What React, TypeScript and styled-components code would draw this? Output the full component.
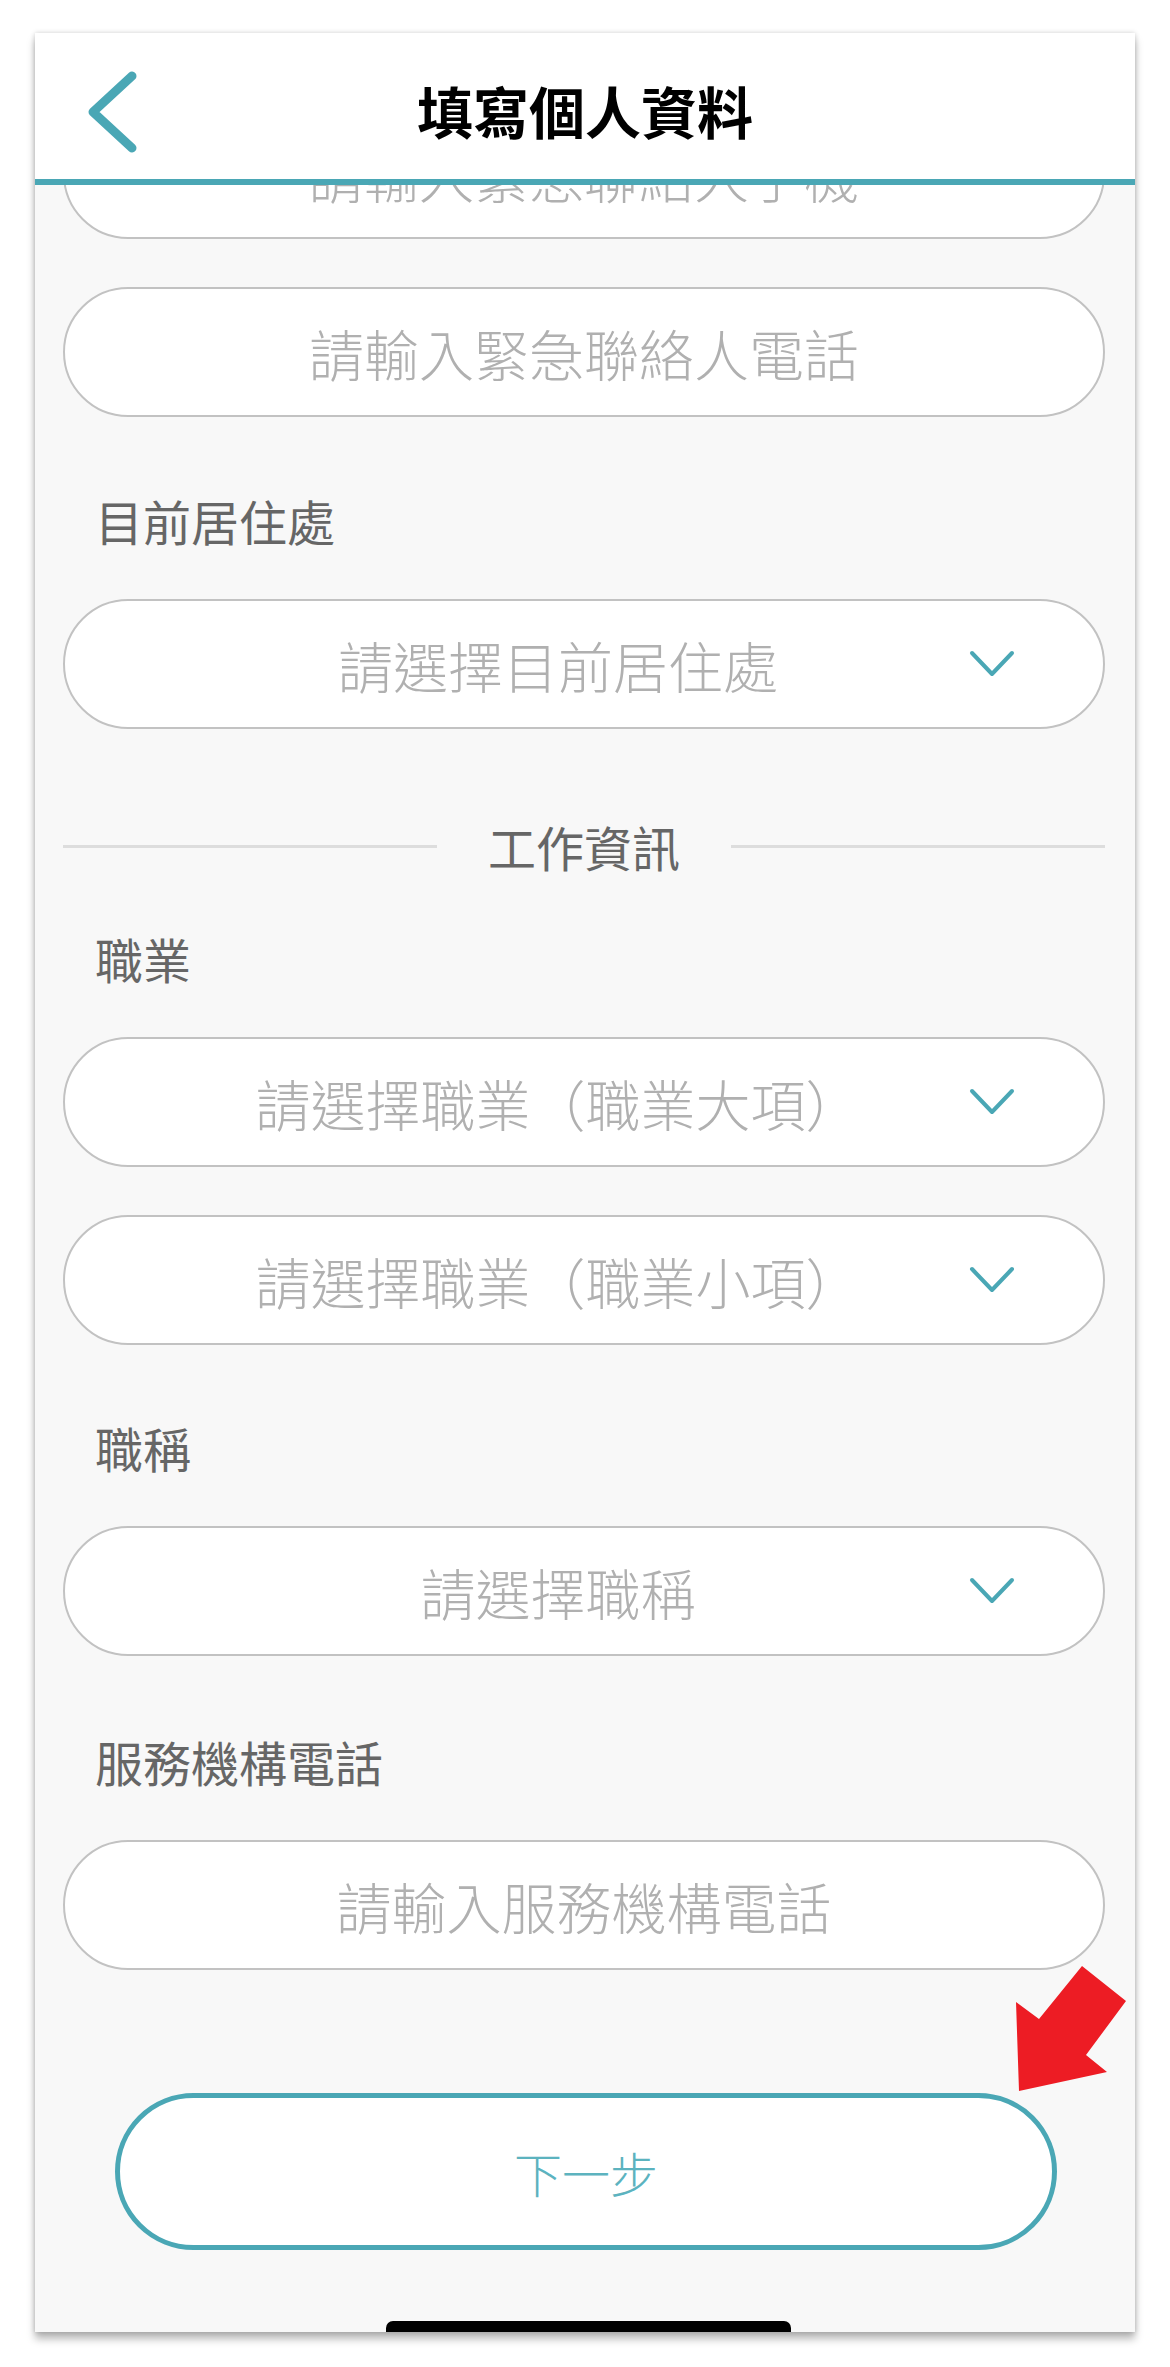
import React from "react";
import styled, { createGlobalStyle } from "styled-components";

const GlobalStyle = createGlobalStyle`
  html, body {
    margin: 0;
    padding: 0;
    background: #ffffff;
  }
  body {
    font-family: "Noto Sans CJK TC", "Noto Sans", sans-serif;
  }
  * { box-sizing: border-box; }
`;

const TEAL = "#4aa7b5";

const Page = styled.div`
  width: 1170px;
  height: 2367px;
  padding: 33px 35px 35px 35px;
  background: #ffffff;
`;

const Phone = styled.div`
  position: relative;
  width: 1100px;
  height: 2299px;
  background: #f8f8f8;
  overflow: hidden;
  display: flex;
  flex-direction: column;
  box-shadow: 0 7px 8px rgba(0, 0, 0, 0.28), 0 0 5px rgba(0, 0, 0, 0.18);
`;

const Header = styled.header`
  position: relative;
  z-index: 2;
  height: 152px;
  flex: none;
  background: #ffffff;
  border-bottom: 6px solid ${TEAL};
  display: flex;
  align-items: center;
  justify-content: center;
  padding-top: 8px;
`;

const BackButton = styled.button`
  position: absolute;
  left: 50px;
  top: 35px;
  width: 60px;
  height: 90px;
  padding: 0;
  border: none;
  background: transparent;
  display: flex;
  align-items: center;
  justify-content: center;
`;

const Title = styled.h1`
  margin: 0;
  font-size: 56px;
  line-height: 1;
  font-weight: 700;
  color: #000000;
  letter-spacing: 0;
`;

const Content = styled.main`
  position: relative;
  z-index: 1;
  margin-top: -76px;
  padding: 0 30px 0 28px;
  display: flex;
  flex-direction: column;
`;

const Stack = styled.div`
  display: flex;
  flex-direction: column;
  gap: 48px;
`;

const Group = styled.section<{ $top: number }>`
  margin-top: ${(p) => p.$top}px;
  display: flex;
  flex-direction: column;
`;

const Label = styled.div`
  height: 52px;
  line-height: 52px;
  font-size: 48px;
  color: #666666;
  padding-left: 32px;
  margin-bottom: 53px;
  white-space: nowrap;
`;

const Field = styled.div<{ $select?: boolean }>`
  height: 130px;
  border: 2px solid #c2c2c2;
  border-radius: 65px;
  background: #ffffff;
  display: flex;
  align-items: center;
  padding: ${(p) => (p.$select ? "0 88px 0 82px" : "0")};
`;

const Placeholder = styled.span`
  flex: 1;
  text-align: center;
  font-size: 55px;
  line-height: 1;
  font-weight: 300;
  color: #b0b0b0;
  white-space: nowrap;
`;

const Chevron = styled.svg`
  flex: none;
  width: 46px;
  height: 28px;
`;

const Divider = styled.div`
  margin-top: 87px;
  height: 60px;
  display: flex;
  align-items: center;
`;

const Rule = styled.div`
  flex: 1;
  height: 3px;
  background: #dddddd;
`;

const DividerText = styled.span`
  margin: 0 51px;
  font-size: 48px;
  line-height: 1;
  color: #666666;
  white-space: nowrap;
`;

const NextButton = styled.button`
  margin: 123px auto 0 auto;
  width: 942px;
  height: 157px;
  border: 5px solid ${TEAL};
  border-radius: 79px;
  background: #ffffff;
  font-family: "Noto Sans CJK TC", "Noto Sans", sans-serif;
  font-size: 48px;
  font-weight: 300;
  color: #5cb3bf;
  display: flex;
  align-items: center;
  justify-content: center;
  padding: 0;
  position: relative;
  left: 2px;
`;

const HomeIndicator = styled.div`
  margin: 71px auto 0 auto;
  width: 405px;
  height: 14px;
  border-radius: 7px 7px 0 0;
  background: #000000;
  position: relative;
  left: 3px;
`;

const Annotation = styled.svg`
  position: absolute;
  z-index: 3;
  left: 975px;
  top: 1925px;
  width: 125px;
  height: 140px;
`;

const ChevronDown = () => (
  <Chevron viewBox="0 0 46 28">
    <polyline
      points="3,3 23,24 43,3"
      fill="none"
      stroke={TEAL}
      strokeWidth="4"
      strokeLinecap="round"
      strokeLinejoin="round"
    />
  </Chevron>
);

const InputField = ({ text }: { text: string }) => (
  <Field>
    <Placeholder>{text}</Placeholder>
  </Field>
);

const SelectField = ({ text }: { text: string }) => (
  <Field $select>
    <Placeholder>{text}</Placeholder>
    <ChevronDown />
  </Field>
);

export default function App() {
  return (
    <>
      <GlobalStyle />
      <Page>
        <Phone>
          <Header>
            <BackButton aria-label="back">
              <svg width="60" height="90" viewBox="0 0 60 90">
                <polyline
                  points="47,8 8,44 47,80"
                  fill="none"
                  stroke={TEAL}
                  strokeWidth="9"
                  strokeLinecap="round"
                  strokeLinejoin="round"
                />
              </svg>
            </BackButton>
            <Title>填寫個人資料</Title>
          </Header>

          <Content>
            <Stack>
              <InputField text="請輸入緊急聯絡人手機" />
              <InputField text="請輸入緊急聯絡人電話" />
            </Stack>

            <Group $top={77}>
              <Label>目前居住處</Label>
              <SelectField text="請選擇目前居住處" />
            </Group>

            <Divider>
              <Rule />
              <DividerText>工作資訊</DividerText>
              <Rule />
            </Divider>

            <Group $top={56}>
              <Label>職業</Label>
              <Stack>
                <SelectField text="請選擇職業（職業大項）" />
                <SelectField text="請選擇職業（職業小項）" />
              </Stack>
            </Group>

            <Group $top={76}>
              <Label>職稱</Label>
              <SelectField text="請選擇職稱" />
            </Group>

            <Group $top={79}>
              <Label>服務機構電話</Label>
              <InputField text="請輸入服務機構電話" />
            </Group>

            <NextButton>下一步</NextButton>
          </Content>

          <HomeIndicator />

          <Annotation viewBox="0 0 125 140">
            <polygon
              points="72,8 116,43 76,97 97,114 9,133 6,44 29,61"
              fill="#ed1c24"
            />
          </Annotation>
        </Phone>
      </Page>
    </>
  );
}
